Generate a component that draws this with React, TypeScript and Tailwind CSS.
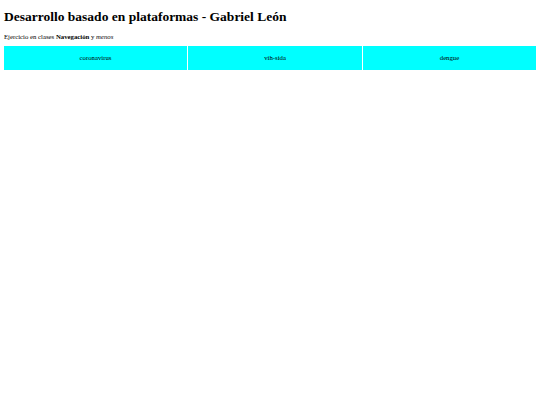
import React from 'react';

const temas = ['coronavirus', 'vih-sida', 'dengue'];

export default function App() {
  return (
    <div className="min-h-[405px] bg-white px-[4px] pt-[9px] text-black" style={{ fontFamily: '"Liberation Serif", "Times New Roman", serif' }}>
      <h1 className="text-[13.5px] font-bold leading-[15px]">Desarrollo basado en plataformas - Gabriel León</h1>
      <p className="mt-[9px] text-[6.75px] leading-[8px]">
        Ejercicio en clases <b>Navegación</b> y <i>menos</i>
      </p>
      <div className="mt-[5px] grid grid-cols-[183px_174px_1fr] gap-[1px]">
        {temas.map((t) => (
          <div key={t} className="flex h-[24px] items-center justify-center bg-[#00ffff] text-[6.75px]">
            {t}
          </div>
        ))}
      </div>
    </div>
  );
}
